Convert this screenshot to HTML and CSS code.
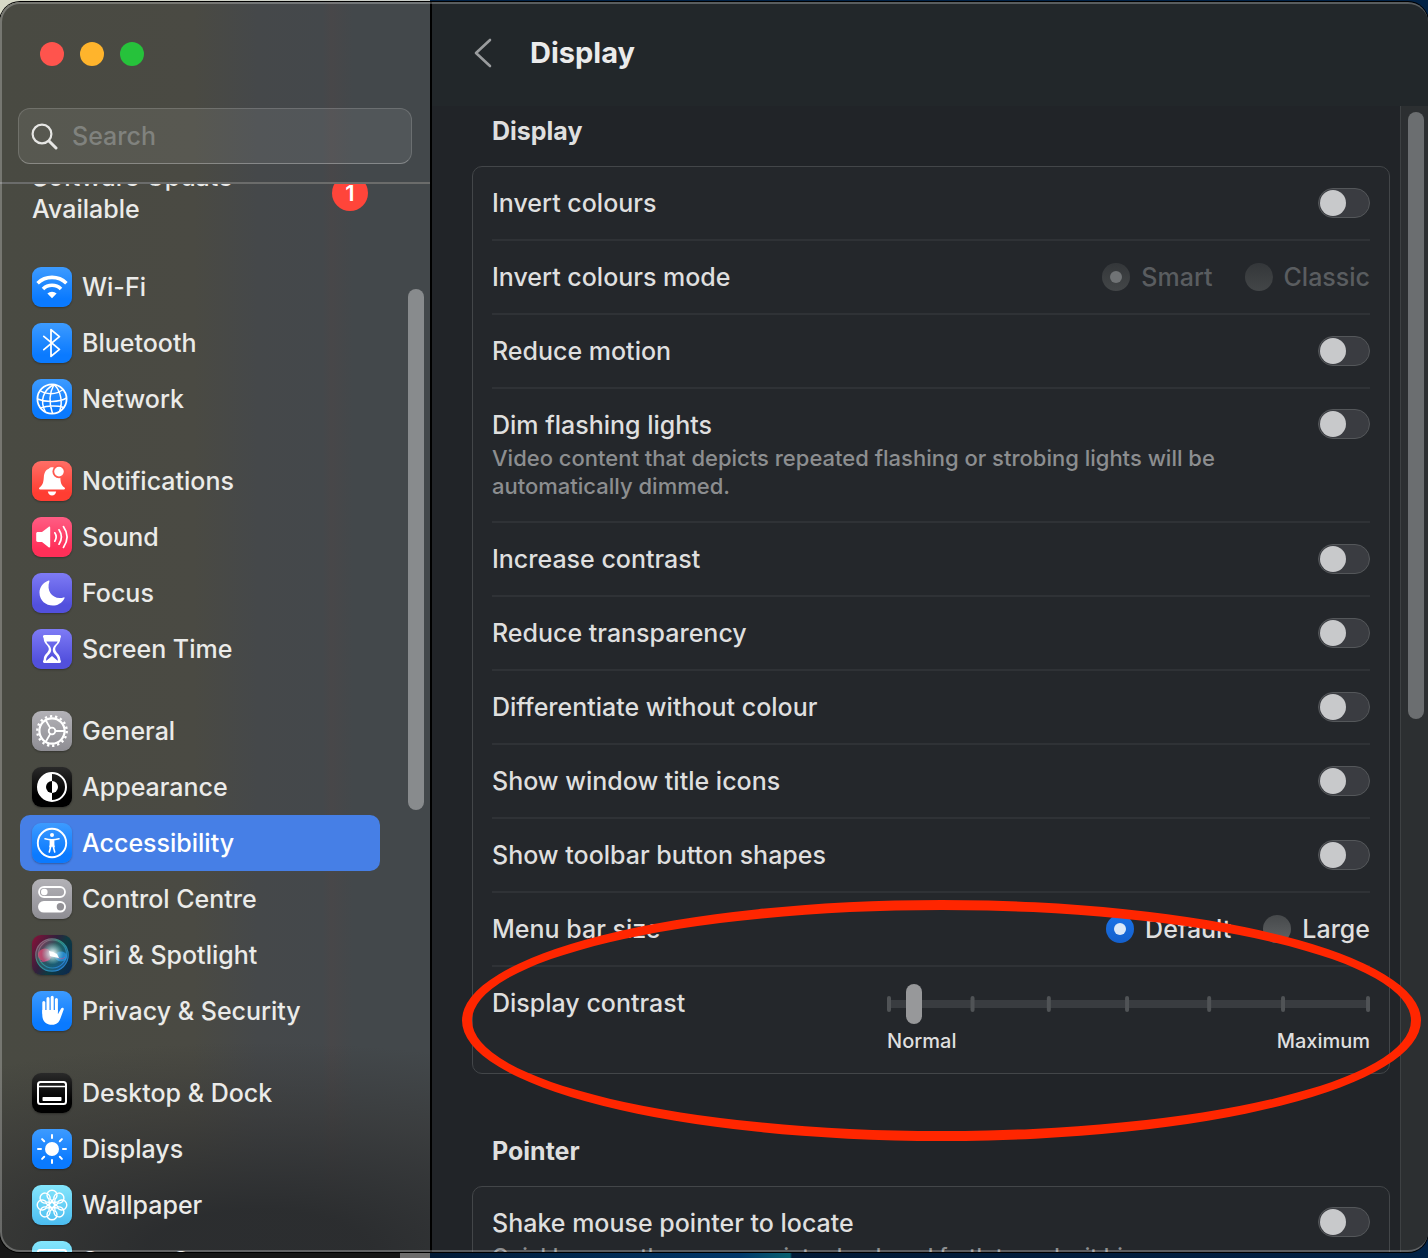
FILE: index.html
```html
<!DOCTYPE html>
<html lang="en-GB">
<head>
    <meta charset="UTF-8">
    <meta name="viewport" content="width=device-width, initial-scale=1.0">
    <title>Display</title>
    <link rel="stylesheet" href="styles.css">
</head>
<body>
    <div class="window">
        <aside class="sidebar">
            <div class="sidebar-top">
                <div class="lights">
                    <button type="button" class="light close" aria-label="Close"></button>
                    <button type="button" class="light minimise" aria-label="Minimise"></button>
                    <button type="button" class="light zoom" aria-label="Zoom"></button>
                </div>
                <label class="search">
                    <svg viewBox="0 0 28 28" width="28" height="28" fill="none" stroke="#e6e6e4" stroke-linecap="round"><circle cx="11" cy="12" r="9.4" stroke-width="2.2"/><path d="M18 19l7 7" stroke-width="3"/></svg>
                    <input type="search" placeholder="Search" aria-label="Search">
                </label>
            </div>
            <div class="sidebar-scroll">
                <nav class="nav">
                    <a href="#" class="update"><span>Software Update Available</span><span class="badge">1</span></a>
                    <ul>
                        <li><a href="#" class="item">
                            <svg class="icon blue" viewBox="0 0 40 40" fill="none" stroke="#fff" stroke-width="3.6"><path d="M5.6 16.2a20.6 20.6 0 0 1 28.8 0"/><path d="M11 22a12.8 12.8 0 0 1 18 0"/><path d="M15.4 26.6a6.6 6.6 0 0 1 9.2 0L20 31.2z" fill="#fff" stroke="none"/></svg>
                            Wi-Fi</a></li>
                        <li><a href="#" class="item">
                            <svg class="icon blue" viewBox="0 0 40 40" fill="none" stroke="#fff" stroke-width="1.8" stroke-linejoin="round" stroke-linecap="round"><path d="M11.8 13.4L27.4 26.4 19 33.4V6.6l8.4 7L11.8 26.6"/></svg>
                            Bluetooth</a></li>
                        <li><a href="#" class="item">
                            <svg class="icon blue" viewBox="0 0 40 40" fill="none" stroke="#fff" stroke-width="1.5"><circle cx="20" cy="20" r="14.6" stroke-width="1.8"/><path d="M22 5.5C11 11 7.5 22 13.5 33M22 5.5c-4.5 8-5 19-1.5 29M22 5.5c7 6.5 9 18 5.5 27M8 11.5c6 4.2 16 4.5 23-1M5.6 20c8 3.5 21 3.5 29-1M8.5 29c7-2.5 17-2.5 23.5-.5"/></svg>
                            Network</a></li>
                    </ul>
                    <ul>
                        <li><a href="#" class="item">
                            <svg class="icon red" viewBox="0 0 40 40"><path d="M20 6.2c1.4 0 2 .5 2.3 1.1a6.3 6.3 0 0 0 6 8.700c.3 6.5 1 8 4.2 10.600.9 1 .5 2-.7 2H8.200c-1.200 0-1.600-1-.7-2 3-2.600 3.900-4.600 4.300-10.200.4-5 2.200-7.700 5-8.600.4-1 1.600-1.600 3.200-1.600z" fill="#fff"/><path d="M15.800 30.400h8.400c-.6 2.600-2 4-4.200 4s-3.600-1.400-4.200-4z" fill="#fff"/><circle cx="27" cy="10.600" r="5.700" fill="#fff" stroke="#ff5a50" stroke-width="1.800"/></svg>
                            Notifications</a></li>
                        <li><a href="#" class="item">
                            <svg class="icon pink" viewBox="0 0 40 40" fill="none" stroke="#fff" stroke-width="1.7" stroke-linecap="round"><path d="M4.2 16.5c0-1 .6-1.6 1.6-1.6H10l6.6-5c.8-.6 1.6-.2 1.6.7v19c0 .9-.8 1.3-1.6.7l-6.6-5.400H5.800c-1 0-1.600-.6-1.600-1.600z" fill="#fff" stroke="none"/><path d="M22.800 15.800c1.700 2.600 1.700 5.800 0 8.400M27 12.800c3 4.500 3 9.900 0 14.400M31.400 9.600c4.600 6.500 4.600 14.300 0 20.800"/></svg>
                            Sound</a></li>
                        <li><a href="#" class="item">
                            <svg class="icon purple" viewBox="0 0 40 40" fill="#fff"><path d="M16.600 7.600c.7-.4 1 .1.800.8C14 18 21 27.200 31.600 24.400c.8-.2 1.200.2.800 1C26 37.500 7.500 33.200 7.500 19.400c0-5 3.600-9.800 9.100-11.800z"/></svg>
                            Focus</a></li>
                        <li><a href="#" class="item">
                            <svg class="icon purple" viewBox="0 0 40 40" fill="#fff"><path fill-rule="evenodd" d="M12.500 6h15c1.400 0 1.800 1.200 1.300 2.300-.3.800-.6 1.100-.6 2.200-.2 4.200-5 6-5 9.500s4.800 5.300 5 9.500c0 1.100.3 1.400.6 2.200.5 1.100.1 2.300-1.300 2.300h-15c-1.400 0-1.800-1.200-1.300-2.300.3-.8.6-1.100.6-2.200.2-4.200 5-6 5-9.500s-4.800-5.300-5-9.500c0-1.100-.3-1.400-.6-2.200C10.700 7.200 11.100 6 12.500 6zM14.400 12.500c.8 3 4.600 3.800 4.800 8.500-.2 4.400-4.600 4.800-5.200 10.400h.6l5.400-4.400 5.400 4.400h.6c-.6-5.600-5-6-5.200-10.400.2-4.700 4-5.500 4.800-8.500z"/></svg>
                            Screen Time</a></li>
                    </ul>
                    <ul>
                        <li><a href="#" class="item">
                            <svg class="icon grey" viewBox="0 0 40 40" fill="none" stroke="#fff"><circle cx="20" cy="20" r="14.7" stroke-width="2.4" stroke-dasharray="2.3 2.833"/><circle cx="20" cy="20" r="12.6" stroke-width="2.2"/><circle cx="20" cy="20" r="3.3" stroke-width="1.8"/><path d="M23.3 20h9.5M18.3 17.1L13.6 9M18.3 22.9L13.6 31" stroke-width="1.8"/></svg>
                            General</a></li>
                        <li><a href="#" class="item">
                            <svg class="icon black" viewBox="0 0 40 40"><circle cx="20" cy="20" r="14" fill="none" stroke="#fff" stroke-width="2"/><path d="M20 6a14 14 0 0 0 0 28z" fill="#fff"/><path d="M20 14a6 6 0 0 0 0 12z" fill="#000"/><path d="M20 14a6 6 0 0 1 0 12z" fill="#fff"/></svg>
                            Appearance</a></li>
                        <li><a href="#" class="item selected">
                            <svg class="icon blue" viewBox="0 0 40 40" fill="none" stroke="#fff"><circle cx="20" cy="20" r="14.2" stroke-width="1.9"/><circle cx="20" cy="12" r="2" fill="#fff" stroke="none"/><path d="M13 15.800c4.500 1.200 9.500 1.200 14 0M17.300 29l1.700-6.500h2l1.700 6.500" stroke-width="1.6" stroke-linecap="round"/><path d="M17.600 16h4.800v5.500l.6 3-3-1-3 1 .6-3z" fill="#fff" stroke="none"/></svg>
                            Accessibility</a></li>
                        <li><a href="#" class="item">
                            <svg class="icon grey" viewBox="0 0 40 40"><rect x="7" y="8" width="26" height="10" rx="5" fill="none" stroke="#fff" stroke-width="1.8"/><circle cx="12.3" cy="13" r="3.3" fill="#fff"/><rect x="6" y="22" width="28" height="11.6" rx="5.8" fill="#fff"/><circle cx="28.4" cy="27.8" r="3.7" fill="#929196"/></svg>
                            Control Centre</a></li>
                        <li><a href="#" class="item">
                            <svg class="icon siri" viewBox="0 0 40 40">
                                <defs>
                                    <linearGradient id="orb" x1="0" y1="0" x2="1" y2="1"><stop offset="0" stop-color="#c04a78"/><stop offset=".4" stop-color="#2f9583"/><stop offset="1" stop-color="#2478e6"/></linearGradient>
                                    <radialGradient id="glow"><stop offset="0" stop-color="#fff"/><stop offset=".35" stop-color="#cfe9ec" stop-opacity=".75"/><stop offset="1" stop-color="#8fd8d8" stop-opacity="0"/></radialGradient>
                                </defs>
                                <circle cx="20" cy="20" r="16" fill="url(#orb)" opacity=".45"/>
                                <g fill="none" stroke="url(#orb)" stroke-width="1.2"><circle cx="20" cy="20" r="16.2"/><circle cx="20.5" cy="19" r="14"/></g>
                                <ellipse cx="13" cy="20" rx="7" ry="6.5" fill="#e04874" opacity=".75"/>
                                <ellipse cx="29" cy="21.5" rx="6" ry="5" fill="#2a93dc" opacity=".8"/>
                                <path d="M8 26c6 3 10-6 14-5s7 5 11 1" fill="none" stroke="#d6468d" opacity=".6"/>
                                <circle cx="20.5" cy="18.5" r="11" fill="url(#glow)"/>
                                <path d="M17 16l4 1 4 2 2 4-5-1-4-1z" fill="#fff"/>
                            </svg>
                            Siri &amp; Spotlight</a></li>
                        <li><a href="#" class="item">
                            <svg class="icon blue" viewBox="0 0 40 40" fill="none" stroke="#fff" stroke-width="3" stroke-linecap="round"><path d="M11.800 11.400V22M16 7.400V20M20.200 6.200V20M24.400 8.600V20"/><path d="M10.300 19h15.600v4.300l3.200-5.800c.8-1.500 3.200-.7 2.600 1l-3.300 9c-1.200 3.800-3.900 6.300-8.200 6.300-6.200 0-9.900-3.600-9.900-9.800z" fill="#fff" stroke="none"/></svg>
                            Privacy &amp; Security</a></li>
                    </ul>
                    <ul>
                        <li><a href="#" class="item">
                            <svg class="icon black" viewBox="0 0 40 40" fill="none" stroke="#fff"><rect x="6" y="9" width="28" height="22" rx="2.5" stroke-width="2"/><path d="M6 13.500h28" stroke-width="1.4"/><rect x="10.5" y="24" width="19" height="4" rx=".8" fill="#fff" stroke="none"/></svg>
                            Desktop &amp; Dock</a></li>
                        <li><a href="#" class="item">
                            <svg class="icon blue" viewBox="0 0 40 40" fill="none" stroke="#fff" stroke-width="2" stroke-linecap="round"><circle cx="20" cy="20" r="7" fill="#fff" stroke="none"/><path d="M20 6v3M20 31v3M6 20h3M31 20h3M10.100 10.100l2.100 2.100M27.800 27.800l2.100 2.100M10.100 29.900l2.100-2.100M27.800 12.200l2.100-2.100"/></svg>
                            Displays</a></li>
                        <li><a href="#" class="item">
                            <svg class="icon cyan" viewBox="0 0 40 40" fill="none" stroke="#fff" stroke-width="1.4">
                                <defs><path id="petal" d="M17.600 22L17 14.200a5 5 0 1 1 6 0L22.400 22"/></defs>
                                <use href="#petal"/>
                                <use href="#petal" transform="rotate(45 20 20)"/>
                                <use href="#petal" transform="rotate(90 20 20)"/>
                                <use href="#petal" transform="rotate(135 20 20)"/>
                                <use href="#petal" transform="rotate(180 20 20)"/>
                                <use href="#petal" transform="rotate(225 20 20)"/>
                                <use href="#petal" transform="rotate(270 20 20)"/>
                                <use href="#petal" transform="rotate(315 20 20)"/>
                            </svg>
                            Wallpaper</a></li>
                        <li><a href="#" class="item">
                            <svg class="icon cyan" viewBox="0 0 40 40" fill="none" stroke="#fff" stroke-width="2"><rect x="6" y="9" width="28" height="22" rx="2"/></svg>
                            Screen Saver</a></li>
                    </ul>
                </nav>
                <div class="sidebar-track"><div class="thumb"></div></div>
            </div>
        </aside>

        <main class="main">
            <header class="titlebar">
                <button type="button" class="back" aria-label="Back">
                    <svg viewBox="0 0 20 30" width="20" height="30" fill="none" stroke="#9a9c9e" stroke-width="2.6" stroke-linecap="round" stroke-linejoin="round"><path d="M17 2L3 15l14 13"/></svg>
                </button>
                <h1>Display</h1>
            </header>
            <div class="pane">
                <div class="content">
                    <section>
                        <h2>Display</h2>
                        <div class="card">
                            <label class="row"><span>Invert colours</span><input type="checkbox" class="switch"></label>
                            <div class="row" role="radiogroup" aria-label="Invert colours mode">
                                <span>Invert colours mode</span>
                                <div class="options">
                                    <label><input type="radio" name="mode" checked disabled>Smart</label>
                                    <label><input type="radio" name="mode" disabled>Classic</label>
                                </div>
                            </div>
                            <label class="row"><span>Reduce motion</span><input type="checkbox" class="switch"></label>
                            <label class="row tall">
                                <span>Dim flashing lights<small>Video content that depicts repeated flashing or strobing lights will be automatically dimmed.</small></span>
                                <input type="checkbox" class="switch">
                            </label>
                            <label class="row"><span>Increase contrast</span><input type="checkbox" class="switch"></label>
                            <label class="row"><span>Reduce transparency</span><input type="checkbox" class="switch"></label>
                            <label class="row"><span>Differentiate without colour</span><input type="checkbox" class="switch"></label>
                            <label class="row"><span>Show window title icons</span><input type="checkbox" class="switch"></label>
                            <label class="row"><span>Show toolbar button shapes</span><input type="checkbox" class="switch"></label>
                            <div class="row" role="radiogroup" aria-label="Menu bar size">
                                <span>Menu bar size</span>
                                <div class="options">
                                    <label><input type="radio" name="size" checked>Default</label>
                                    <label><input type="radio" name="size">Large</label>
                                </div>
                            </div>
                            <div class="row contrast">
                                <label for="contrast">Display contrast</label>
                                <div class="slider">
                                    <div class="range">
                                        <svg class="ticks" width="100%" height="16" fill="#505356">
                                            <rect x="0" width="4" height="16" rx="2"/>
                                            <rect x="17.3%" width="4" height="16" rx="2"/>
                                            <rect x="33.1%" width="4" height="16" rx="2"/>
                                            <rect x="49.3%" width="4" height="16" rx="2"/>
                                            <rect x="66.3%" width="4" height="16" rx="2"/>
                                            <rect x="81.6%" width="4" height="16" rx="2"/>
                                            <rect x="99.2%" width="4" height="16" rx="2"/>
                                        </svg>
                                        <input type="range" id="contrast" min="0" max="100" value="4">
                                    </div>
                                    <div class="scale"><span>Normal</span><span>Maximum</span></div>
                                </div>
                            </div>
                        </div>
                    </section>
                    <section>
                        <h2>Pointer</h2>
                        <div class="card">
                            <label class="row tall">
                                <span>Shake mouse pointer to locate<small>Quickly move the mouse pointer back and forth to make it bigger.</small></span>
                                <input type="checkbox" class="switch">
                            </label>
                        </div>
                    </section>
                </div>
                <div class="track"><div class="thumb"></div></div>
                <div class="ring"></div>
            </div>
        </main>
    </div>
</body>
</html>
```

FILE: styles.css
```css
* {
    box-sizing: border-box;
}
body {
    margin: 0;
    height: 100vh;
    padding: 2px 0 6px;
    overflow: hidden;
    font-family: Inter, "Liberation Sans", sans-serif;
    font-size: 25px;
    font-weight: 500;
    line-height: 32px;
    color: #dfdfdf;
    background:
        linear-gradient(90deg, #d8dac8, #c8ccc8 430px, #012246 430px) top / 100% 50% no-repeat,
        linear-gradient(90deg, #161616 400px, #6c6c6c 400px, #6c6c6c 430px, #011a36 430px, #02386a 740px, #076070 790px, #011a36 792px, #012246) bottom / 100% 50% no-repeat;
}
h1, h2, ul {
    margin: 0;
    padding: 0;
}
ul {
    list-style: none;
}
button {
    padding: 0;
    border: none;
    background: none;
}
.window {
    position: relative;
    display: flex;
    height: 100%;
    border-radius: 20px;
    overflow: hidden;
    box-shadow: 0 0 0 1px #000;
}
.window::after {
    content: "";
    position: absolute;
    inset: 0;
    border: 2px solid rgba(255, 255, 255, 0.25);
    border-right-width: 0;
    border-radius: 20px;
    pointer-events: none;
}

/* sidebar */
.sidebar {
    flex: 0 0 432px;
    min-width: 0;
    display: flex;
    flex-direction: column;
    border-right: 2px solid #000;
    background:
        radial-gradient(ellipse 130% 210px at 60% 100%, rgba(42, 44, 46, 0.95) 20%, rgba(50, 50, 50, 0.5) 65%, transparent),
        linear-gradient(90deg, #494a42, #4a4a43 45%, #45484a 60%, #44484b 75%, #484749 77%, #43484b 82%);
}
.sidebar-top {
    height: 182px;
    padding: 40px 18px 0;
    border-bottom: 2px solid #6b6c6b;
}
.lights {
    display: flex;
    gap: 16px;
    padding-left: 22px;
}
.light {
    width: 24px;
    height: 24px;
    border-radius: 50%;
}
.close {
    background: #ff544d;
}
.minimise {
    background: #ffb42c;
}
.zoom {
    background: #26c23b;
}
.search {
    display: flex;
    align-items: center;
    gap: 13px;
    height: 56px;
    margin-top: 42px;
    padding: 0 12px;
    border: 1px solid rgba(255, 255, 255, 0.15);
    border-bottom-color: rgba(255, 255, 255, 0.3);
    border-radius: 12px;
    background: rgba(255, 255, 255, 0.08);
}
.search svg {
    flex: none;
}
.search input {
    flex: 1;
    width: 100%;
    min-width: 0;
    padding: 0;
    border: none;
    outline: none;
    background: none;
    color: #ebebe9;
    font: inherit;
}
.search input::placeholder {
    color: #80827e;
}
.sidebar-scroll {
    flex: 1;
    min-height: 0;
    display: flex;
    overflow: hidden;
}
/* list is scrolled a little way down */
.nav {
    flex: 1;
    min-width: 0;
    margin-top: -22px;
    padding: 0 0 0 20px;
}
.nav ul {
    margin-bottom: 26px;
}
.update {
    display: flex;
    align-items: center;
    justify-content: space-between;
    height: 62px;
    margin-bottom: 35px;
    padding: 0 12px;
    color: #ebebe9;
    text-decoration: none;
}
.update span:first-child {
    width: 220px;
}
.update .badge {
    width: 36px;
    height: 36px;
    border-radius: 50%;
    background: #ff453a;
    color: #fff;
    font-size: 22px;
    font-weight: 600;
    line-height: 36px;
    text-align: center;
}
.item {
    display: flex;
    align-items: center;
    gap: 10px;
    height: 56px;
    padding: 0 12px;
    border-radius: 10px;
    color: #ebebe9;
    text-decoration: none;
    white-space: nowrap;
}
.item.selected {
    background: #467fe6;
    color: #fff;
}
.icon {
    flex: none;
    width: 40px;
    height: 40px;
    border-radius: 9px;
    box-shadow: 0 1px 2px rgba(0, 0, 0, 0.3);
}
.blue {
    background: linear-gradient(#3d9bff, #0a7aff 80%);
}
.red {
    background: linear-gradient(#ff6f66, #ff3d32 80%);
}
.pink {
    background: linear-gradient(#ff5d84, #ff2f58 80%);
}
.purple {
    background: linear-gradient(#7e7bf5, #5250dd 80%);
}
.grey {
    background: linear-gradient(#b3b2b7, #8e8d93);
}
.black {
    background: linear-gradient(#2a2a2a, #000 70%);
}
.cyan {
    background: linear-gradient(#84e6fc, #4bbcf0);
}
.siri {
    background: linear-gradient(120deg, #8c1038, #33203c 40%, #0d3b42 60%, #0c2650);
}
.sidebar-track {
    width: 50px;
    padding: 105px 6px 0 28px;
}
.thumb {
    width: 16px;
    border-radius: 8px;
}
.sidebar-track .thumb {
    height: 521px;
    background: #888b8d;
}

/* settings pane */
.main {
    flex: 1;
    min-width: 0;
    display: flex;
    flex-direction: column;
    background: #212428;
}
.titlebar {
    display: flex;
    align-items: center;
    gap: 37px;
    height: 104px;
    padding: 0 41px 2px;
    background: #22272a;
}
.back {
    height: 30px;
}
.back svg {
    display: block;
}
h1 {
    color: #ebebeb;
    font-size: 29px;
    font-weight: 700;
}
h2 {
    padding: 0 20px;
    font-size: 25px;
    font-weight: 700;
}
.pane {
    position: relative;
    flex: 1;
    min-height: 0;
    display: flex;
}
.content {
    flex: 1;
    min-width: 0;
    padding: 9px 10px 0 40px;
    overflow: hidden;
}
.card {
    margin: 19px 0 61px;
    padding: 0 19px;
    border: 1px solid #434649;
    border-radius: 10px;
    background: #24272b;
}
.row {
    display: flex;
    align-items: center;
    justify-content: space-between;
    gap: 80px;
    height: 74px;
    border-bottom: 2px solid #2f3236;
}
.row:last-child {
    border-bottom: none;
}
.tall, .contrast {
    align-items: flex-start;
    height: auto;
    padding: 20px 0 21px;
}
small {
    display: block;
    margin-top: 3px;
    color: #8c8e90;
    font-size: 22px;
    font-weight: 500;
    line-height: 28px;
}
.switch {
    appearance: none;
    flex: none;
    width: 52px;
    height: 30px;
    margin: 0;
    padding: 1px;
    border: 1px solid #54575a;
    border-radius: 15px;
    background: #3a3c41;
}
.switch::before {
    content: "";
    display: block;
    width: 26px;
    height: 26px;
    border-radius: 50%;
    background: #c8c9cb;
}
.switch:checked {
    background: #1668dc;
}
.switch:checked::before {
    margin-left: auto;
}
.options {
    display: flex;
    gap: 32px;
}
.options label {
    display: flex;
    align-items: center;
    gap: 11px;
}
.options label:has(:disabled) {
    color: #5a5d60;
}
.options input {
    appearance: none;
    display: grid;
    place-items: center;
    width: 28px;
    height: 28px;
    margin: 0;
    border-radius: 50%;
    background: linear-gradient(#46494b, #606365);
}
.options input:checked {
    background: linear-gradient(#1a72e8, #1460cc);
}
.options input:disabled {
    background: linear-gradient(#34373a, #434648);
}
.options input:checked::before {
    content: "";
    width: 12px;
    height: 12px;
    border-radius: 50%;
    background: #dce8f8;
}
.options input:disabled::before {
    background: #707375;
}
.contrast {
    padding: 17px 0 15px;
}
.contrast > label {
    padding-top: 3px;
}
.slider {
    flex: 0 0 55%;
}
.range {
    position: relative;
    height: 40px;
    background: linear-gradient(#393c40, #393c40) center / 100% 8px no-repeat;
}
.ticks {
    position: absolute;
    top: 12px;
    left: 0;
}
.range input {
    appearance: none;
    position: relative;
    display: block;
    width: 100%;
    height: 40px;
    margin: 0;
    background: none;
}
.range input::-webkit-slider-thumb {
    appearance: none;
    width: 16px;
    height: 40px;
    border-radius: 8px;
    background: #97989a;
}
.range input::-moz-range-thumb {
    width: 16px;
    height: 40px;
    border: none;
    border-radius: 8px;
    background: #97989a;
}
.scale {
    display: flex;
    justify-content: space-between;
    padding: 1px 0;
    font-size: 20px;
}
.track {
    width: 28px;
    padding: 6px 4px 0 7px;
    border-left: 1px solid #3e4143;
    background: #2c2f31;
}
.track .thumb {
    height: 607px;
    background: #6b6e70;
}

/* marker around the contrast slider */
.ring {
    position: absolute;
    top: 794px;
    left: 30px;
    right: 7px;
    height: 241px;
    border: 10px solid #ff2600;
    border-radius: 50%;
    pointer-events: none;
}
```
